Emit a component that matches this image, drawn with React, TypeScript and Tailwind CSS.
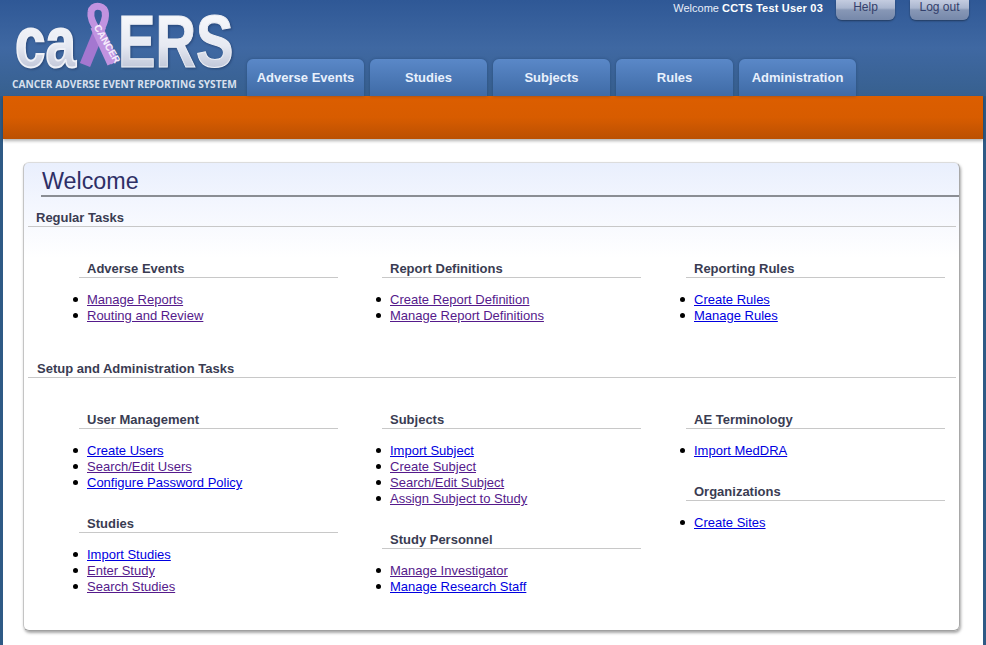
import React from 'react';

type LinkItem = { label: string; visited?: boolean };
type Group = { title: string; links: LinkItem[] };

const tabs = ['Adverse Events', 'Studies', 'Subjects', 'Rules', 'Administration'];

const regular: Group[][] = [
  [{ title: 'Adverse Events', links: [{ label: 'Manage Reports', visited: true }, { label: 'Routing and Review', visited: true }] }],
  [{ title: 'Report Definitions', links: [{ label: 'Create Report Definition', visited: true }, { label: 'Manage Report Definitions', visited: true }] }],
  [{ title: 'Reporting Rules', links: [{ label: 'Create Rules' }, { label: 'Manage Rules' }] }],
];

const setup: Group[][] = [
  [
    { title: 'User Management', links: [{ label: 'Create Users' }, { label: 'Search/Edit Users', visited: true }, { label: 'Configure Password Policy' }] },
    { title: 'Studies', links: [{ label: 'Import Studies' }, { label: 'Enter Study', visited: true }, { label: 'Search Studies', visited: true }] },
  ],
  [
    { title: 'Subjects', links: [{ label: 'Import Subject' }, { label: 'Create Subject', visited: true }, { label: 'Search/Edit Subject', visited: true }, { label: 'Assign Subject to Study', visited: true }] },
    { title: 'Study Personnel', links: [{ label: 'Manage Investigator', visited: true }, { label: 'Manage Research Staff' }] },
  ],
  [
    { title: 'AE Terminology', links: [{ label: 'Import MedDRA' }] },
    { title: 'Organizations', links: [{ label: 'Create Sites' }] },
  ],
];

function Logo() {
  return (
    <svg width="247" height="96" viewBox="0 0 247 96" className="shrink-0">
      <defs>
        <linearGradient id="letters" x1="0" y1="0" x2="0" y2="1">
          <stop offset="0" stopColor="#ffffff" />
          <stop offset="0.55" stopColor="#e6e9f2" />
          <stop offset="1" stopColor="#a9b1c8" />
        </linearGradient>
      </defs>
      <g className="drop-shadow-[1px_1px_1px_rgba(20,40,80,0.5)]">
        <text transform="translate(15 67) scale(0.96 1.26)" fontFamily="Liberation Sans" fontWeight="700" fontSize="57" fill="url(#letters)" stroke="#eef0f6" strokeWidth="1.6">ca</text>
        <text transform="translate(118 67) scale(1.04 1.36)" fontFamily="Liberation Sans" fontWeight="700" fontSize="54" fill="url(#letters)" stroke="#eef0f6" strokeWidth="0.8">ERS</text>
      </g>
      <path d="M101 26 L85 65" stroke="#a477d0" strokeWidth="11" fill="none" />
      <path d="M98 35 C103 26 107 18 105 11 C103 5 92 4 91 12 C90 18 93 23 97 30 L114 63" stroke="#c193e0" strokeWidth="7" fill="none" />
      <path d="M96 26 L113 63" stroke="#c193e0" strokeWidth="12" fill="none" />
      <text transform="translate(93.5 27) rotate(60)" fontFamily="Liberation Sans" fontWeight="700" fontSize="10" fill="#f6ecfc">CANCER</text>
      <text transform="translate(12 87.5) scale(0.967 1)" fontFamily="Open Sans" fontWeight="700" fontSize="10.5" fill="#d8e0ee">CANCER ADVERSE EVENT REPORTING SYSTEM</text>
    </svg>
  );
}

function TaskGroup({ group }: { group: Group }) {
  return (
    <div className="w-[259px]">
      <h3 className="h-[18px] border-b border-[#c8c8c8] pl-2 text-[13px] leading-[18px] font-bold text-[#3a3c52]">{group.title}</h3>
      <ul className="mt-[14px]">
        {group.links.map((link) => (
          <li key={link.label} className="relative h-4 pl-2 text-[13px] leading-4">
            <span className="absolute top-[5px] left-[-6px] size-[5px] rounded-full bg-black" />
            <a href="#" className={link.visited ? 'text-[#551a8b] underline' : 'text-[#0000e0] underline'}>
              {link.label}
            </a>
          </li>
        ))}
      </ul>
    </div>
  );
}

function Section({ title, columns, indent }: { title: string; columns: Group[][]; indent: string }) {
  return (
    <section>
      <h2 className={`h-[18px] border-b border-[#c8c8c8] text-[13px] leading-[18px] font-bold text-[#3a3c52] ${indent}`}>{title}</h2>
      <div className="mt-[33px] grid grid-cols-[303px_304px_259px] pl-[51px]">
        {columns.map((col, i) => (
          <div key={i} className="flex flex-col gap-[24px]">
            {col.map((group) => (
              <TaskGroup key={group.title} group={group} />
            ))}
          </div>
        ))}
      </div>
    </section>
  );
}

export default function App() {
  return (
    <div className="h-[645px] w-[986px] overflow-hidden bg-[#2f5a85] font-['Liberation_Sans',Arial,sans-serif]">
      <header className="flex h-[96px] bg-gradient-to-b from-[#2f5896] via-[#3f68a2] to-[#37608f]">
        <Logo />
        <div className="flex flex-1 flex-col justify-between">
          <div className="flex items-start justify-end pr-[17px]">
            <p className="mt-[1px] mr-[13px] text-[11px] leading-[14px] text-[#e8eefa]">
              Welcome <b className="tracking-[0.2px] text-white">CCTS Test User 03</b>
            </p>
            <a href="#" className="h-[20px] w-[59px] rounded-b-md bg-[linear-gradient(to_bottom,#c4cce0_0px,#aab6cf_8px,#8797b6_10px,#7688aa_20px)] text-center text-[12px] leading-[15px] text-[#33406b] shadow-[0_1px_2px_rgba(0,0,0,0.4)]">Help</a>
            <a href="#" className="ml-[15px] h-[20px] w-[59px] rounded-b-md bg-[linear-gradient(to_bottom,#c4cce0_0px,#aab6cf_8px,#8797b6_10px,#7688aa_20px)] text-center text-[12px] leading-[15px] text-[#33406b] shadow-[0_1px_2px_rgba(0,0,0,0.4)]">Log out</a>
          </div>
          <nav className="flex gap-[6px]">
            {tabs.map((tab) => (
              <a key={tab} href="#" className="h-[37px] w-[117px] rounded-t-md bg-gradient-to-b from-[#5a88c8] to-[#3f6ba6] text-center text-[13px] leading-[38px] font-bold text-[#e8f0fc] shadow-[0_0_3px_rgba(20,50,90,0.45)]">
                {tab}
              </a>
            ))}
          </nav>
        </div>
      </header>

      <div className="mx-[3px] h-[549px] bg-white">
        <div className="h-[43px] bg-gradient-to-b from-[#dc5e00] via-[#d85c00] to-[#bb5002] shadow-[0_2px_3px_rgba(0,0,0,0.3)]" />
        <main className="pt-[23px] pl-[20px]">
          <div className="h-[469px] w-[937px] rounded-md border border-t-[#dcdcdc] border-r-[#a8a8a8] border-b-[#a0a0a0] border-l-[#c4c4c4] bg-[linear-gradient(to_bottom,#e9effd_0px,#f3f6fe_40px,#ffffff_95px)] shadow-[1px_2px_3px_rgba(0,0,0,0.35)]">
            <h1 className="ml-[17px] h-[34px] border-b-2 border-[#8a8d93] pl-[1px] text-[23.3px] leading-[36px] text-[#2e2f66]">Welcome</h1>
            <div className="mt-[12px] mr-[3px] ml-[4px] flex flex-col gap-[36px]">
              <Section title="Regular Tasks" columns={regular} indent="pl-2" />
              <Section title="Setup and Administration Tasks" columns={setup} indent="pl-[9px]" />
            </div>
          </div>
        </main>
      </div>
    </div>
  );
}
